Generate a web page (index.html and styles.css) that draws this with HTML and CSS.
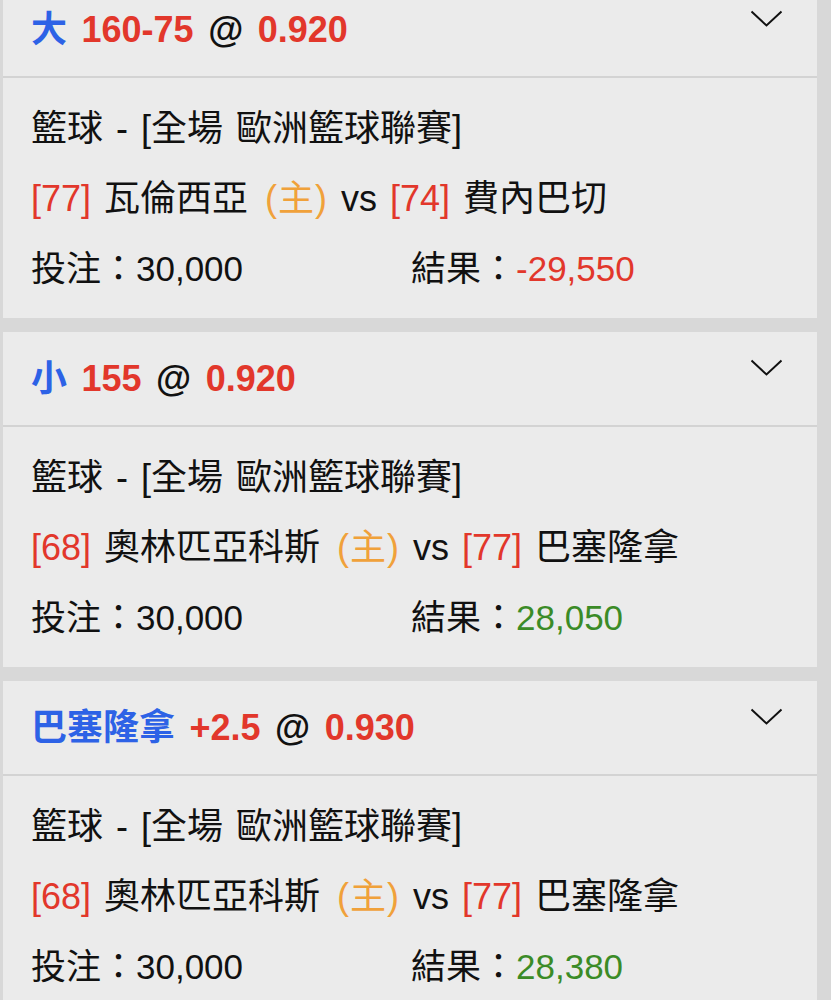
FILE: index.html
```html
<!DOCTYPE html>
<html>
<head>
  <meta charset="utf-8">
  <title>投注記錄</title>
  <link rel="stylesheet" href="styles.css">
</head>
<body>
  <div class="list">
    <div class="card">
      <div class="card-head">
        <div class="bet-title"><span class="pick">大</span> <span class="line">160-75</span> @ <span class="line">0.920</span></div>
        <svg class="chevron" width="33" height="17" viewBox="0 0 33 17"><polyline points="1.5,1.5 16.5,15.5 31.5,1.5" fill="none" stroke="#111" stroke-width="2"/></svg>
      </div>
      <div class="card-body">
        <div class="row">籃球 - [全場 歐洲籃球聯賽]</div>
        <div class="row"><span class="rank">[77]</span> 瓦倫西亞 <span class="home">(主)</span> vs <span class="rank">[74]</span> 費內巴切</div>
        <div class="row stats">
          <div>投注：30,000</div>
          <div>結果：<span class="loss">-29,550</span></div>
        </div>
      </div>
    </div>

    <div class="card">
      <div class="card-head">
        <div class="bet-title"><span class="pick">小</span> <span class="line">155</span> @ <span class="line">0.920</span></div>
        <svg class="chevron" width="33" height="17" viewBox="0 0 33 17"><polyline points="1.5,1.5 16.5,15.5 31.5,1.5" fill="none" stroke="#111" stroke-width="2"/></svg>
      </div>
      <div class="card-body">
        <div class="row">籃球 - [全場 歐洲籃球聯賽]</div>
        <div class="row"><span class="rank">[68]</span> 奧林匹亞科斯 <span class="home">(主)</span> vs <span class="rank">[77]</span> 巴塞隆拿</div>
        <div class="row stats">
          <div>投注：30,000</div>
          <div>結果：<span class="win">28,050</span></div>
        </div>
      </div>
    </div>

    <div class="card">
      <div class="card-head">
        <div class="bet-title"><span class="pick">巴塞隆拿</span> <span class="line">+2.5</span> @ <span class="line">0.930</span></div>
        <svg class="chevron" width="33" height="17" viewBox="0 0 33 17"><polyline points="1.5,1.5 16.5,15.5 31.5,1.5" fill="none" stroke="#111" stroke-width="2"/></svg>
      </div>
      <div class="card-body">
        <div class="row">籃球 - [全場 歐洲籃球聯賽]</div>
        <div class="row"><span class="rank">[68]</span> 奧林匹亞科斯 <span class="home">(主)</span> vs <span class="rank">[77]</span> 巴塞隆拿</div>
        <div class="row stats">
          <div>投注：30,000</div>
          <div>結果：<span class="win">28,380</span></div>
        </div>
      </div>
    </div>
  </div>
</body>
</html>
```

FILE: styles.css
```css
body {
  margin: 0;
  background-color: #d8d8d8;
  font-family: "Liberation Sans", "Noto Sans CJK TC", sans-serif;
  color: #111;
  overflow: hidden;
}
.list {
  margin-top: -17px;
  padding: 0 14px 0 3px;
  display: flex;
  flex-direction: column;
  gap: 14px;
}
.card {
  background-color: #ebebeb;
}
.card-head {
  display: flex;
  justify-content: space-between;
  align-items: flex-start;
  height: 93px;
  padding: 0 34px 0 28px;
  border-bottom: 2px solid #d3d3d3;
}
.bet-title {
  font-size: 36px;
  font-weight: bold;
  line-height: 93px;
  word-spacing: 4.5px;
  white-space: nowrap;
}
.pick {
  color: #2d62e6;
}
.line {
  color: #e2372b;
}
.chevron {
  margin-top: 27px;
}
.card-body {
  height: 240px;
  box-sizing: border-box;
  padding: 16px 28px 14px;
  font-size: 36px;
}
.row {
  height: 70px;
  line-height: 70px;
  word-spacing: 3px;
  white-space: nowrap;
}
.stats {
  display: grid;
  grid-template-columns: 380px auto;
  font-size: 35px;
  word-spacing: 0;
}
.rank {
  color: #e2372b;
}
.home {
  margin-left: 4px;
  letter-spacing: 1px;
  color: #f0a13a;
}
.loss {
  color: #e2372b;
}
.win {
  color: #3b8b27;
}
```
